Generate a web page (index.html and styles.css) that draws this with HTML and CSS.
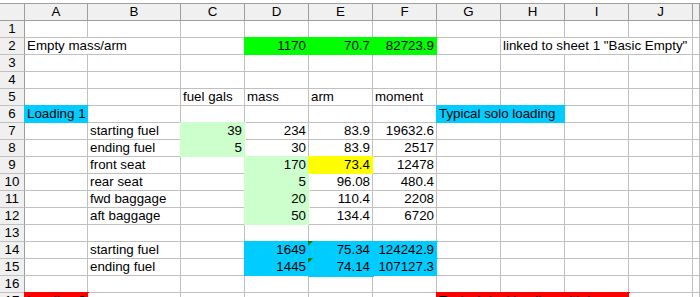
FILE: index.html
```html
<!DOCTYPE html>
<html>
<head>
<meta charset="utf-8">
<link rel="stylesheet" href="styles.css">
</head>
<body>
<div class="sheet">
  <div class="h corner"></div><div class="h">A</div><div class="h">B</div><div class="h">C</div><div class="h">D</div><div class="h">E</div><div class="h">F</div><div class="h">G</div><div class="h">H</div><div class="h">I</div><div class="h">J</div><div class="h"></div>

  <div class="rh">1</div><div class="c"></div><div class="c"></div><div class="c"></div><div class="c"></div><div class="c"></div><div class="c"></div><div class="c"></div><div class="c"></div><div class="c"></div><div class="c"></div><div class="c"></div>

  <div class="rh">2</div><div class="c s2">Empty mass/arm</div><div class="c"></div><div class="c n f green">1170</div><div class="c n f green">70.7</div><div class="c n f green">82723.9</div><div class="c"></div><div class="c s3">linked to sheet 1 "Basic Empty"</div><div class="c"></div>

  <div class="rh">3</div><div class="c"></div><div class="c"></div><div class="c"></div><div class="c"></div><div class="c"></div><div class="c"></div><div class="c"></div><div class="c"></div><div class="c"></div><div class="c"></div><div class="c"></div>

  <div class="rh">4</div><div class="c"></div><div class="c"></div><div class="c"></div><div class="c"></div><div class="c"></div><div class="c"></div><div class="c"></div><div class="c"></div><div class="c"></div><div class="c"></div><div class="c"></div>

  <div class="rh">5</div><div class="c"></div><div class="c"></div><div class="c">fuel gals</div><div class="c">mass</div><div class="c">arm</div><div class="c">moment</div><div class="c"></div><div class="c"></div><div class="c"></div><div class="c"></div><div class="c"></div>

  <div class="rh">6</div><div class="c f cyan">Loading 1</div><div class="c"></div><div class="c"></div><div class="c"></div><div class="c"></div><div class="c"></div><div class="c s2 f cyan">Typical solo loading</div><div class="c"></div><div class="c"></div><div class="c"></div>

  <div class="rh">7</div><div class="c"></div><div class="c">starting fuel</div><div class="c n f lgreen">39</div><div class="c n">234</div><div class="c n">83.9</div><div class="c n">19632.6</div><div class="c"></div><div class="c"></div><div class="c"></div><div class="c"></div><div class="c"></div>

  <div class="rh">8</div><div class="c"></div><div class="c">ending fuel</div><div class="c n f lgreen">5</div><div class="c n">30</div><div class="c n">83.9</div><div class="c n">2517</div><div class="c"></div><div class="c"></div><div class="c"></div><div class="c"></div><div class="c"></div>

  <div class="rh">9</div><div class="c"></div><div class="c">front seat</div><div class="c"></div><div class="c n f lgreen">170</div><div class="c n f yellow">73.4</div><div class="c n">12478</div><div class="c"></div><div class="c"></div><div class="c"></div><div class="c"></div><div class="c"></div>

  <div class="rh">10</div><div class="c"></div><div class="c">rear seat</div><div class="c"></div><div class="c n f lgreen">5</div><div class="c n">96.08</div><div class="c n">480.4</div><div class="c"></div><div class="c"></div><div class="c"></div><div class="c"></div><div class="c"></div>

  <div class="rh">11</div><div class="c"></div><div class="c">fwd baggage</div><div class="c"></div><div class="c n f lgreen">20</div><div class="c n">110.4</div><div class="c n">2208</div><div class="c"></div><div class="c"></div><div class="c"></div><div class="c"></div><div class="c"></div>

  <div class="rh">12</div><div class="c"></div><div class="c">aft baggage</div><div class="c"></div><div class="c n f lgreen">50</div><div class="c n">134.4</div><div class="c n">6720</div><div class="c"></div><div class="c"></div><div class="c"></div><div class="c"></div><div class="c"></div>

  <div class="rh">13</div><div class="c"></div><div class="c"></div><div class="c"></div><div class="c"></div><div class="c"></div><div class="c"></div><div class="c"></div><div class="c"></div><div class="c"></div><div class="c"></div><div class="c"></div>

  <div class="rh">14</div><div class="c"></div><div class="c">starting fuel</div><div class="c"></div><div class="c n f cyan">1649</div><div class="c n f cyan warn">75.34</div><div class="c n f cyan">124242.9</div><div class="c"></div><div class="c"></div><div class="c"></div><div class="c"></div><div class="c"></div>

  <div class="rh">15</div><div class="c"></div><div class="c">ending fuel</div><div class="c"></div><div class="c n f cyan">1445</div><div class="c n f cyan warn">74.14</div><div class="c n f cyan">107127.3</div><div class="c"></div><div class="c"></div><div class="c"></div><div class="c"></div><div class="c"></div>

  <div class="rh">16</div><div class="c"></div><div class="c"></div><div class="c"></div><div class="c"></div><div class="c"></div><div class="c"></div><div class="c"></div><div class="c"></div><div class="c"></div><div class="c"></div><div class="c"></div>

  <div class="rh">17</div><div class="c f red">Loading 2</div><div class="c"></div><div class="c"></div><div class="c"></div><div class="c"></div><div class="c"></div><div class="c s3 f red">Typical dual loading with baggage</div><div class="c"></div><div class="c"></div>
</div>
</body>
</html>
```

FILE: styles.css
```css
html, body {
  margin: 0;
  padding: 0;
  background: #ffffff;
  overflow: hidden;
}

.sheet {
  margin-top: 3px;
  border-top: 1px solid #a0a0a0;
  display: grid;
  grid-template-columns: 25px 63px 93px repeat(8, 64px) 1fr;
  grid-auto-rows: 17px;
  font-family: "Liberation Sans", Arial, sans-serif;
  font-size: 13.33px;
  line-height: 16px;
  color: #000;
}

.sheet > div {
  box-sizing: border-box;
  white-space: nowrap;
  overflow: hidden;
}

.h {
  background: #f0f0f0;
  border-right: 1px solid #9d9d9d;
  border-bottom: 1px solid #9d9d9d;
  text-align: center;
  color: #000;
}

.rh {
  background: #f0f0f0;
  border-right: 1px solid #9d9d9d;
  border-bottom: 1px solid #c0c0c0;
  text-align: center;
  color: #000;
}

.c {
  background: #ffffff;
  border-right: 1px solid #c0c0c0;
  border-bottom: 1px solid #c0c0c0;
  padding: 0 2px 0 2px;
}

.n {
  text-align: right;
}

.s2 { grid-column: span 2; }
.s3 { grid-column: span 3; }

.f {
  border-color: transparent;
  background: var(--fill);
  box-shadow: 0 0 0 1px var(--fill);
  overflow: visible;
}

.green { --fill: #00ff00; }
.lgreen { --fill: #ccffcc; }
.yellow { --fill: #ffff00; }
.cyan { --fill: #00ccff; }
.red { --fill: #ff0000; }

.sheet > .warn {
  position: relative;
  overflow: visible;
}

.warn::before {
  content: "";
  position: absolute;
  left: -1px;
  top: -1px;
  width: 0;
  height: 0;
  border-top: 5px solid #008000;
  border-right: 5px solid transparent;
}
```
